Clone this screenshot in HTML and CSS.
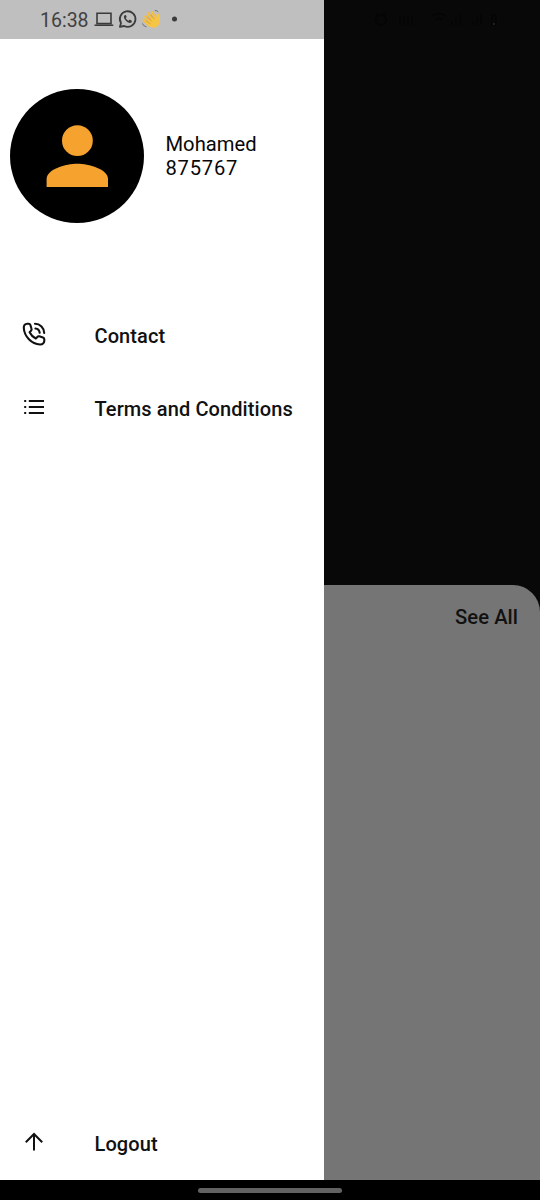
FILE: index.html
```
<!DOCTYPE html>
<html lang="en">
<head>
<meta charset="utf-8">
<title>Menu</title>
<link rel="stylesheet" href="styles.css">
</head>
<body>
<div class="screen">
  <div class="content">
    <aside class="drawer">
      <header class="status">
        <span class="clock">16:38</span>
        <svg class="status-icons" width="92" height="24" viewBox="0 0 92 24" fill="none">
          <path d="M4 5.3H18V15.5H4ZM1.5 17.2H20.3" stroke="#3b3b3b" stroke-width="1.6"/>
          <path d="M26.9 18.9L28 15.1A7.8 7.8 0 1 1 31.1 18Z" stroke="#3b3b3b" stroke-width="1.8" stroke-linejoin="round"/>
          <path d="M31.6 7.3C30.3 8.5 30.8 10.5 32.9 12.7C35.4 15.3 37.6 15.5 38.8 14.1V12.7L36.6 11.6L35.6 12.7C34.1 12.1 33.2 11.1 32.8 9.8L33.7 8.9L32.8 7Z" fill="#3b3b3b"/>
          <path d="M52.5 8.5L57 14M55.2 5.5L60 12M59 4.4L63 11M50.8 12L56 17" stroke="#f4bd43" stroke-width="2.7" stroke-linecap="round"/>
          <path d="M52.8 14.8L61 8.2L63.2 10C64 8.5 63.1 5.7 65 5.6C67.2 6 67.6 12.5 66.2 15.8C64.5 19.8 60 20.8 56.8 18.4Z" fill="#f7c546"/>
          <path d="M54.3 8.7L59 13.5M57.7 6.8L61.7 11.3M53.2 12.8L57.5 16" stroke="#b98a30" stroke-width=".6"/>
          <path d="M49.4 15.4Q50 18.2 53.4 18.8M61.8 2.4Q64.2 2.4 65.2 4" stroke="#68747a" stroke-width="1"/>
          <circle cx="81.5" cy="11" r="2.5" fill="#3b3b3b"/>
        </svg>
      </header>
      <section class="profile">
        <div class="avatar">
          <svg width="62" height="62" viewBox="0 0 62 62" fill="#f5a22f">
            <circle cx="31.4" cy="15.7" r="15.4"/>
            <path d="M.6 62V54C.6 44 20 38.7 31.3 38.7S62 44 62 54V62Z"/>
          </svg>
        </div>
        <div class="identity"><div>Mohamed</div><div class="number">875767</div></div>
      </section>
      <nav class="menu">
        <a class="item">
          <svg class="icon" width="24" height="24" viewBox="0 0 24 24" fill="none" stroke="#111" stroke-width="2.1" stroke-linecap="round" stroke-linejoin="round">
            <path d="M5.2 1.7C3 1.7 1.6 3.5 1.8 6C2.3 14.5 9.5 22 18 22.5C20.5 22.7 22.3 21 22.3 18.8V17.2C22.3 16.3 21.7 15.7 20.9 15.4L17.3 14.3C16.5 14.1 15.8 14.4 15.3 15L13.8 16.5C11.2 15.2 8.9 12.8 7.6 10.2L9 8.8C9.6 8.2 9.8 7.5 9.5 6.7L8.4 3C8.1 2.1 7.5 1.7 6.6 1.7Z"/>
            <path d="M13 1.8A9.3 9.3 0 0 1 22.2 11M13.4 6.5A4.9 4.9 0 0 1 17.7 10.8"/>
          </svg>
          <span class="label">Contact</span>
        </a>
        <a class="item">
          <svg class="icon" width="24" height="24" viewBox="0 0 24 24" fill="none" stroke="#111" stroke-width="2">
            <path d="M6.8 6H22M6.8 12H22M6.8 18H22M2.2 6H4.2M2.2 12H4.2M2.2 18H4.2"/>
          </svg>
          <span class="label">Terms and Conditions</span>
        </a>
        <a class="item logout">
          <svg class="icon" width="24" height="24" viewBox="0 0 24 24" fill="none" stroke="#111" stroke-width="2">
            <path d="M12 20.4V4M3.8 12.2L12 4L20.2 12.2"/>
          </svg>
          <span class="label">Logout</span>
        </a>
      </nav>
    </aside>
    <main class="backdrop">
      <div class="hero">
        <svg width="140" height="20" viewBox="0 0 140 20" fill="none" stroke="#050505" stroke-width="2">
          <circle cx="15" cy="10" r="5"/>
          <path d="M10 5L12 3M18 3L20 5M34 6V15M38 6V15M42 6V15M46 6V15M66 6Q73 1 80 6M70 10Q73 7 76 10M86 15V11M90 15V7M94 15V4M107 15V11M111 15V7M115 15V4"/>
          <path d="M126 5H130V15H126Z"/>
          <path d="M127 14H128.5" stroke="#343434" stroke-width="1.5"/>
        </svg>
      </div>
      <div class="sheet"><span class="see-all">See All</span></div>
    </main>
  </div>
  <footer class="gesture"><div class="handle"></div></footer>
</div>
</body>
</html>
```
FILE: styles.css
```
* { box-sizing: border-box; }
body { margin: 0; font-family: Roboto, sans-serif; color: #111; }
.screen { width: 540px; height: 1200px; display: flex; flex-direction: column; background: #000; overflow: hidden; }
.content { height: 1180px; display: flex; }
.drawer { width: 324px; background: #fff; display: flex; flex-direction: column; }
.status { height: 39px; flex: none; background: #bfbfbf; padding: 8px 0 0 40px; display: flex; }
.clock { width: 53px; padding-top: 1px; font-size: 19.5px; line-height: 24px; color: #414141; }
.profile { height: 134px; margin: 50px 0 0 10px; display: flex; align-items: center; gap: 21.5px; }
.avatar { width: 134px; height: 134px; border-radius: 50%; background: #000; display: flex; align-items: center; justify-content: center; }
.identity { font-size: 20.2px; line-height: 24px; color: #080808; }
.number { letter-spacing: .75px; }
.menu { flex: 1; padding: 98px 22px 24px; display: flex; flex-direction: column; }
.item { height: 27px; display: flex; align-items: flex-start; gap: 48.5px; margin-bottom: 46px; }
.icon { margin-top: 1px; }
.label { font-size: 20px; line-height: 24px; font-weight: 500; letter-spacing: .1px; padding-top: 3px; white-space: nowrap; }
.logout { margin: auto 0 0; }
.backdrop { width: 216px; background: #080808; display: flex; flex-direction: column; }
.hero { height: 585px; padding: 10px 0 0 42px; }
.sheet { flex: 1; background: #757575; border-top-right-radius: 27px; padding: 20px 22px; text-align: right; }
.see-all { font-size: 20.2px; line-height: 24px; font-weight: 500; letter-spacing: .05px; }
.gesture { height: 20px; display: flex; justify-content: center; align-items: center; }
.handle { width: 144px; height: 5px; border-radius: 3px; background: #626262; }
```
